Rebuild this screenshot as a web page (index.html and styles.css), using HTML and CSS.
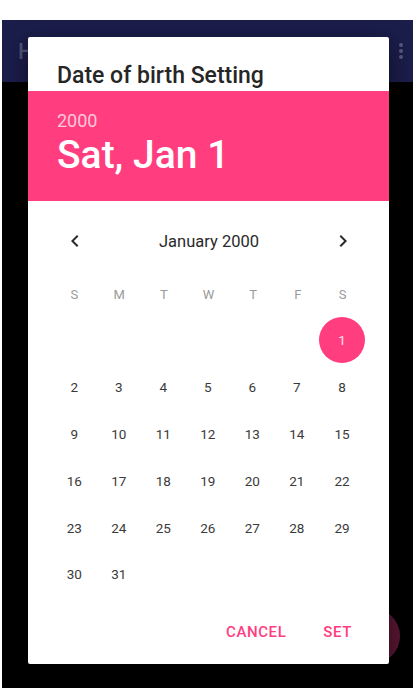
FILE: index.html
```html
<!DOCTYPE html>
<html lang="en">
<head>
    <meta charset="UTF-8">
    <meta name="viewport" content="width=device-width, initial-scale=1.0">
    <title>Date of birth Setting</title>
    <link rel="stylesheet" href="styles.css">
</head>
<body>
    <div class="screen">
        <div class="appbar">
            <span class="appbar-title">H</span>
            <span class="overflow"><i></i><i></i><i></i></span>
        </div>
        <div class="fab"></div>

        <div class="dialog">
            <div class="dialog-title">Date of birth Setting</div>

            <div class="date-header">
                <div class="year">2000</div>
                <div class="date">Sat, Jan 1</div>
            </div>

            <div class="month-nav">
                <svg class="chev" viewBox="0 0 24 24"><path d="M15.41 7.41L14 6l-6 6 6 6 1.41-1.41L10.83 12z"/></svg>
                <span class="month-name">January 2000</span>
                <svg class="chev" viewBox="0 0 24 24"><path d="M8.59 16.59L10 18l6-6-6-6-1.41 1.41L13.17 12z"/></svg>
            </div>

            <div class="weekdays">
                <span>S</span><span>M</span><span>T</span><span>W</span><span>T</span><span>F</span><span>S</span>
            </div>

            <div class="days">
                <span></span><span></span><span></span><span></span><span></span><span></span>
                <span class="selected"><b>1</b></span>
                <span>2</span><span>3</span><span>4</span><span>5</span><span>6</span><span>7</span><span>8</span>
                <span>9</span><span>10</span><span>11</span><span>12</span><span>13</span><span>14</span><span>15</span>
                <span>16</span><span>17</span><span>18</span><span>19</span><span>20</span><span>21</span><span>22</span>
                <span>23</span><span>24</span><span>25</span><span>26</span><span>27</span><span>28</span><span>29</span>
                <span>30</span><span>31</span>
            </div>

            <div class="actions">
                <button class="text-btn">CANCEL</button>
                <button class="text-btn">SET</button>
            </div>
        </div>
    </div>
</body>
</html>
```

FILE: styles.css
```css
body {
    margin: 0;
    background: #fff;
    font-family: Roboto, "Noto Sans", sans-serif;
}

.screen {
    position: relative;
    margin: 20px 0 0 2px;
    height: 668px;
    background: #000;
    overflow: hidden;
}

.appbar {
    height: 62px;
    background: #1b1d4b;
    display: flex;
    align-items: center;
    justify-content: space-between;
    padding: 0 16px;
}

.appbar-title {
    color: #4f5478;
    font-size: 22px;
    font-weight: 500;
}

.overflow {
    display: flex;
    flex-direction: column;
    gap: 2px;
    margin-right: -6px;
}

.overflow i {
    width: 4px;
    height: 4px;
    border-radius: 50%;
    background: #555a7c;
}

.fab {
    position: absolute;
    left: 342px;
    top: 588px;
    width: 56px;
    height: 56px;
    border-radius: 50%;
    background: #5a1733;
}

.dialog {
    position: absolute;
    left: 26px;
    top: 17px;
    width: 361px;
    background: #fff;
    border-radius: 2px;
    box-shadow: 0 8px 24px rgba(0,0,0,0.5);
}

.dialog-title {
    height: 54px;
    box-sizing: border-box;
    padding: 26px 29px 0;
    font-size: 23px;
    line-height: 26px;
    font-weight: 500;
    color: #262626;
}

.date-header {
    height: 110px;
    box-sizing: border-box;
    padding: 19px 29px 0;
    background: #ff3d7f;
    color: #fff;
}

.year {
    font-size: 18px;
    line-height: 22px;
    color: rgba(255,255,255,0.72);
}

.date {
    margin-top: 1px;
    font-size: 39px;
    line-height: 44px;
    font-weight: 500;
}

.month-nav {
    display: flex;
    align-items: center;
    justify-content: space-between;
    height: 46px;
    margin-top: 17px;
    padding: 0 34px 0 35px;
}

.chev {
    width: 24px;
    height: 24px;
    fill: #2a2a2a;
}

.month-name {
    font-size: 16.5px;
    color: #2a2a2a;
}

.weekdays,
.days {
    display: grid;
    grid-template-columns: repeat(7, 1fr);
    padding: 0 24px;
    text-align: center;
}

.weekdays {
    height: 46px;
    margin-top: 7px;
    align-items: center;
    font-size: 13px;
    color: #9a9a9a;
}

.days {
    grid-auto-rows: 46.8px;
    font-size: 13.5px;
    color: #3a3a3a;
}

.days span {
    display: flex;
    align-items: center;
    justify-content: center;
}

.days .selected b {
    display: flex;
    align-items: center;
    justify-content: center;
    width: 46px;
    height: 46px;
    border-radius: 50%;
    background: #ff3d7f;
    color: #ffe3ec;
    font-weight: 400;
}

.actions {
    display: flex;
    justify-content: flex-end;
    gap: 21px;
    margin-top: 16px;
    padding: 0 29px 14px 0;
}

.text-btn {
    height: 36px;
    padding: 0 8px;
    border: none;
    background: none;
    font-family: Roboto, sans-serif;
    font-size: 15px;
    font-weight: 500;
    letter-spacing: 0.6px;
    color: #ff3d7f;
}
```
